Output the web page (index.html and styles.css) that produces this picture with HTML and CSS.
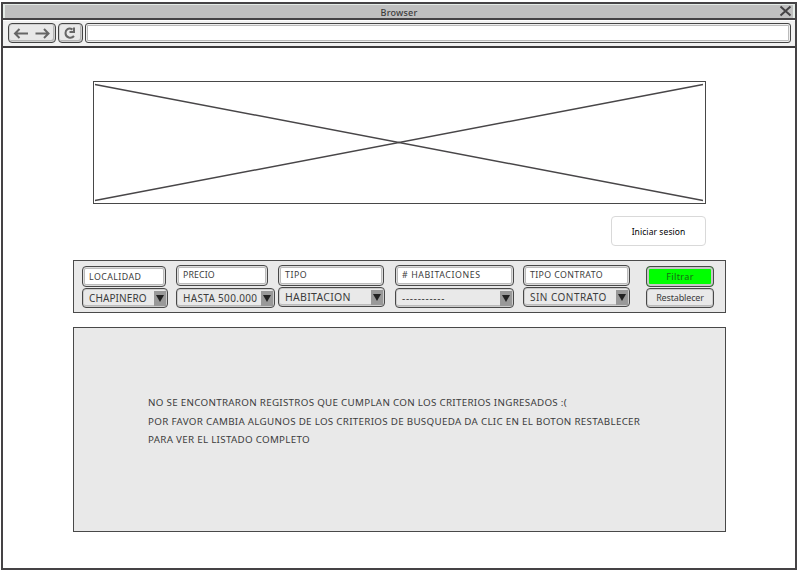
FILE: index.html
```html
<!DOCTYPE html>
<html lang="es">
<head>
<meta charset="utf-8">
<title>Browser</title>
<link rel="stylesheet" href="styles.css">
</head>
<body>
<div class="window">
  <header class="titlebar"><span class="title">Browser</span>
    <svg class="close" width="13" height="12" viewBox="0 0 13 12"><path d="M1.500 1.500 11.500 10.500M11.500 1.500 1.500 10.500"/></svg>
  </header>
  <nav class="toolbar">
    <div class="tool history"><svg width="46" height="18" viewBox="0 0 46 18"><path d="M19 9.500H6M10.500 5 6 9.500 10.500 14M26.500 9.500h13M35 5l4.500 4.500L35 14"/></svg></div>
    <div class="tool reload"><svg width="23" height="18" viewBox="0 0 23 18"><path d="M13.500 5.500C9.500 3.300 6.500 5.500 6.500 9c0 5 6 6 8.500 3M15 3.500V8h-4.500"/></svg></div>
    <div class="address"></div>
  </nav>
  <main class="page">
    <div class="hero"><svg width="611" height="121" viewBox="0 0 611 121"><path d="M1 2.500 609 118.500M1 118.500 609 2.500"/></svg></div>
    <button class="login"><span>Iniciar sesion</span></button>
    <section class="filters">
      <div class="group g1"><div class="field"><span>LOCALIDAD</span></div><div class="select"><span>CHAPINERO</span><i></i></div></div>
      <div class="group g2"><div class="field"><span>PRECIO</span></div><div class="select"><span>HASTA 500.000</span><i></i></div></div>
      <div class="group g3"><div class="field"><span>TIPO</span></div><div class="select"><span>HABITACION</span><i></i></div></div>
      <div class="group g4"><div class="field"><span># HABITACIONES</span></div><div class="select"><span>-----------</span><i></i></div></div>
      <div class="group g5"><div class="field"><span>TIPO CONTRATO</span></div><div class="select"><span>SIN CONTRATO</span><i></i></div></div>
      <div class="group g6"><button class="action apply"><span>Filtrar</span></button><button class="action reset"><span>Restablecer</span></button></div>
    </section>
    <section class="results">
      <p>NO SE ENCONTRARON REGISTROS QUE CUMPLAN CON LOS CRITERIOS INGRESADOS :(</p>
      <p>POR FAVOR CAMBIA ALGUNOS DE LOS CRITERIOS DE BUSQUEDA DA CLIC EN EL BOTON RESTABLECER</p>
      <p>PARA VER EL LISTADO COMPLETO</p>
    </section>
  </main>
</div>
</body>
</html>
```
FILE: styles.css
```css
* { box-sizing: border-box; }
body { margin: 0; background: #fff; color: #3c3c3c; font-family: "Comic Sans MS", "Noto Sans", sans-serif; overflow: hidden; }
svg { display: block; fill: none; stroke: #666; stroke-width: 2; }
button { font-family: inherit; padding: 0; margin: 0; }
span, p { white-space: nowrap; }
.window { width: 796px; height: 568px; margin: 2px 0 0 1px; border: 2px solid #454345; }
.titlebar { height: 14px; border: 1px solid #e4ebe6; border-bottom: 0; border-left-width: 2px; border-right-width: 2px; background: #c0c0c0; display: flex; align-items: center; justify-content: center; position: relative; font-size: 9px; line-height: 13px; font-weight: 500; letter-spacing: .2px; }
.title { padding-top: 1px; }
.close { position: absolute; right: 1px; top: 0; stroke: #454345; }
.toolbar { height: 30px; border-top: 2px solid #454345; border-bottom: 2px solid #3c3a3c; background: #f1f1f1; display: flex; align-items: flex-start; padding: 3px 4px 0 5px; box-shadow: inset 0 1px #fff; }
.tool { height: 20px; border: 1px solid #444; border-radius: 4px; background: #e8e8e8; box-shadow: inset 0 0 0 1px #cfcfcf, inset -1px -1px 0 1px #b4b4b4; }
.history { width: 48px; margin-right: 2px; }
.reload { width: 25px; margin-right: 2px; }
.address { flex: 1; height: 20px; border: 1px solid #444; border-radius: 3px; background: #fff; box-shadow: inset 0 0 0 1px #eee, inset 0 0 0 2px #bbb; }
.page { padding: 33px 0 0 70px; display: flex; flex-direction: column; }
.hero { margin-left: 20px; width: 613px; height: 123px; border: 1px solid #484848; }
.hero svg { stroke: #484648; stroke-width: 1.5; }
.login { width: 95px; height: 30px; margin: 12px 0 14px 538px; background: #fff; border: 1px solid #d9d9d9; border-radius: 4px; color: #000; font-size: 8.5px; letter-spacing: .08px; }
.filters { width: 653px; height: 53px; border: 1px solid #4a4a4a; background: #e9e9e9; display: grid; grid-template-columns: 94px 102px 117px 128px 123px 68px; padding-left: 8px; }
.group { display: flex; flex-direction: column; padding-top: 4px; gap: 2px; }
.field { height: 21px; border: 1px solid #484848; border-radius: 4px; background: #fff; box-shadow: inset 0 0 0 1px #ddd, inset 0 0 0 2px #bbb; padding-left: 6px; line-height: 18px; font-size: 8.8px; }
.select { height: 20px; border: 1px solid #484848; border-radius: 4px; background: #e9e9e9; box-shadow: inset 0 0 0 1px #ccc, inset 0 -2px #bbb; display: flex; align-items: center; justify-content: space-between; padding: 0 1px 0 6px; line-height: 18px; font-size: 10px; }
.select i { width: 12px; height: 15px; background: #999; display: flex; justify-content: center; align-items: center; flex: none; }
.select i::before { content: ""; border: 4.500px solid transparent; border-top: 7px solid #222; border-bottom: 0; }
.g1 { padding-top: 5px; }
.g1, .g6 { gap: 1px; }
.g1 .field { width: 84px; line-height: 20px; letter-spacing: .45px; }
.g1 .select { width: 86px; letter-spacing: .1px; }
.g2 .field { width: 92px; letter-spacing: .1px; }
.g2 .select { width: 99px; letter-spacing: .32px; }
.g3, .g5 { gap: 1px; }
.g3 .field { width: 106px; letter-spacing: .55px; }
.g3 .select { width: 107px; font-size: 10.500px; letter-spacing: .3px; }
.g4 .field { width: 119px; letter-spacing: .6px; }
.g4 .select { width: 119px; letter-spacing: .7px; }
.g5 .field { width: 107px; letter-spacing: .37px; }
.g5 .select { width: 107px; letter-spacing: .47px; }
.g6 { padding-top: 5px; }
.action { width: 68px; border: 1px solid #484848; border-radius: 4px; background: #e9e9e9; box-shadow: inset 0 0 0 1px #ccc, inset 0 -2px #bbb; color: #3c3c3c; font-size: 9px; line-height: 18px; }
.apply { height: 21px; background: #0f0; box-shadow: inset 0 0 0 2px #c6c6c6; color: #176717; letter-spacing: .4px; }
.reset { height: 20px; letter-spacing: -.15px; }
.results { margin-top: 14px; width: 653px; height: 205px; border: 1px solid #484848; background: #e9e9e9; padding: 66px 0 0 74px; }
.results p { margin: 0; width: max-content; font-size: 9.8px; line-height: 18.500px; letter-spacing: .29px; }
```
